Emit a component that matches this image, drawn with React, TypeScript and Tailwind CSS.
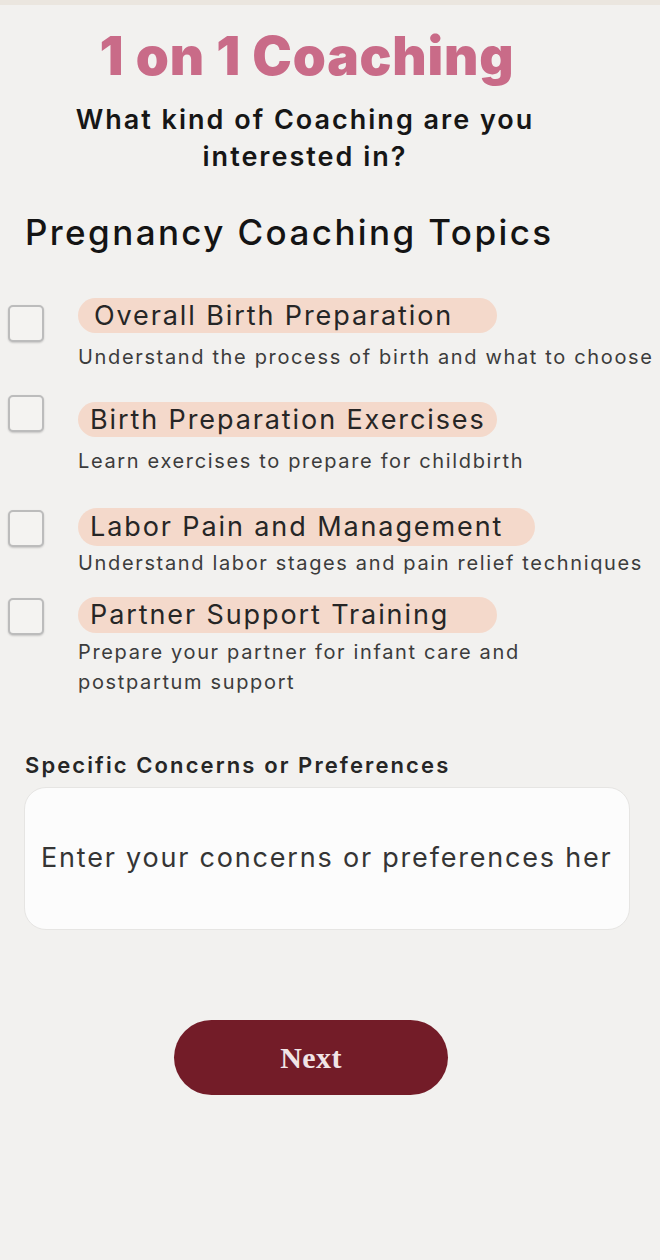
import React from 'react';

const topics = [
  {
    title: 'Overall Birth Preparation',
    desc: 'Understand the process of birth and what to choose',
    row: '',
    box: 'pt-[7px]',
    pill: 'mt-0 h-[35px] w-[419px] pl-[16px]',
    text: 'mt-[10px] leading-[29px]',
  },
  {
    title: 'Birth Preparation Exercises',
    desc: 'Learn exercises to prepare for childbirth',
    row: 'mt-[23px]',
    box: 'pt-0',
    pill: 'mt-[7px] h-[35px] w-[419px] pl-[12px]',
    text: 'mt-[10px] leading-[29px]',
  },
  {
    title: 'Labor Pain and Management',
    desc: 'Understand labor stages and pain relief techniques',
    row: 'mt-[32px]',
    box: 'pt-[2px]',
    pill: 'mt-0 h-[38px] w-[457px] pl-[12px]',
    text: 'mt-[3px] leading-[29px]',
  },
  {
    title: 'Partner Support Training',
    desc: '',
    row: 'mt-[19px]',
    box: 'pt-[1px]',
    pill: 'mt-0 h-[36px] w-[419px] pl-[12px]',
    text: 'mt-[4px] leading-[30px]',
  },
];

const App = () => {
  return (
    <div className="min-h-[1260px] w-full bg-[#f2f1ef] font-['Inter',sans-serif] text-[#1b1b1b]">
      <div className="h-[5px] bg-[#ebe6df]" />

      <h1 className="mt-[21px] pr-[46px] text-center text-[53px] font-black leading-[60px] tracking-[0.8px] text-[#c96b88]">
        1 on 1 Coaching
      </h1>

      <p className="mt-[15px] pr-[50px] text-center text-[27px] font-semibold leading-[37px] tracking-[2px] text-[#161616]">
        What kind of Coaching are you
        <br />
        interested in?
      </p>

      <h2 className="mt-[36px] pl-[25px] text-[35px] font-medium leading-[42px] tracking-[2.4px] text-[#141414]">
        Pregnancy Coaching Topics
      </h2>

      <div className="mt-[45px] flex flex-col">
        {topics.map((t, i) => (
          <div key={i} className={`flex items-start ${t.row}`}>
            <div className={`w-[78px] shrink-0 pl-[8px] ${t.box}`}>
              <div className="h-[37px] w-[36px] rounded-[5px] border-2 border-[#bcbcbc] bg-[#f4f3f1] shadow-[0_1px_2px_rgba(0,0,0,0.18)]" />
            </div>
            <div className="flex flex-col">
              <div className={`${t.pill} flex items-center rounded-full bg-[#f4d9cb] text-[27px] leading-[30px] tracking-[1.9px] text-[#262626]`}>
                {t.title}
              </div>
              <p className={`${t.text} whitespace-nowrap text-[20px] tracking-[1.65px] text-[#3c3c3c]`}>
                {i === 3 ? (
                  <>
                    Prepare your partner for infant care and
                    <br />
                    postpartum support
                  </>
                ) : (
                  t.desc
                )}
              </p>
            </div>
          </div>
        ))}
      </div>

      <div className="mt-[54px] px-[24px]">
        <label className="block pl-[1px] text-[22px] font-semibold leading-[28px] tracking-[2.1px] text-[#262626]">
          Specific Concerns or Preferences
        </label>
        <div className="mt-[8px] flex h-[143px] w-[606px] items-center overflow-hidden rounded-[22px] border border-[#e6e5e3] bg-[#fcfcfc] pl-[16px]">
          <span className="whitespace-nowrap text-[27px] tracking-[1.8px] text-[#353535]">
            Enter your concerns or preferences her
          </span>
        </div>
      </div>

      <div className="mt-[90px] pl-[174px]">
        <button className="h-[75px] w-[274px] rounded-full bg-[#731c28] font-['Liberation_Serif',serif] text-[30px] font-bold tracking-[0.4px] text-[#f1e4e6]">
          Next
        </button>
      </div>
    </div>
  );
};

export default App;
